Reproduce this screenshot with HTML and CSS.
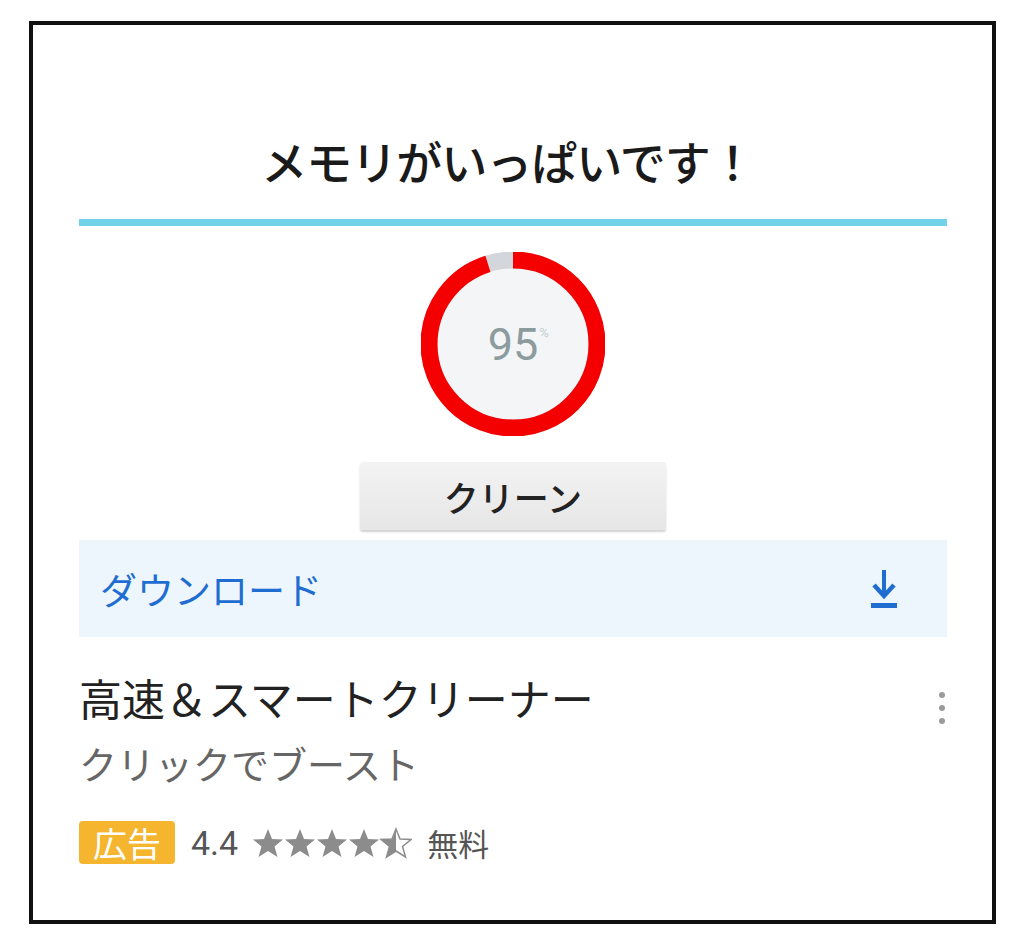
FILE: index.html
```html
<!DOCTYPE html>
<html lang="ja">
<head>
    <meta charset="UTF-8">
    <meta name="viewport" content="width=device-width, initial-scale=1.0">
    <title>メモリがいっぱいです</title>
    <link rel="stylesheet" href="styles.css">
</head>
<body>
    <div class="card">
        <h1 class="title">メモリがいっぱいです！</h1>
        <div class="divider"></div>

        <div class="gauge">
            <svg width="184" height="184" viewBox="0 0 184 184">
                <circle cx="92" cy="92" r="76" fill="#f3f5f7" />
                <circle cx="92" cy="92" r="84" fill="none" stroke="#d3d7db" stroke-width="17" />
                <!-- 95% arc, clockwise from 12 o'clock -->
                <circle cx="92" cy="92" r="84" fill="none" stroke="#f40000" stroke-width="17"
                        stroke-dasharray="501.4 527.8" transform="rotate(-90 92 92)" />
            </svg>
            <div class="gauge-value">95<span class="pct">%</span></div>
        </div>

        <button class="clean">クリーン</button>

        <div class="download">
            <span>ダウンロード</span>
            <svg class="download-icon" width="34" height="44" viewBox="0 0 34 44">
                <path d="M17 3 V28" stroke="#1f6dd1" stroke-width="4" fill="none" />
                <path d="M7 18 L17 29 L27 18" stroke="#1f6dd1" stroke-width="4.5" fill="none" stroke-linejoin="miter" />
                <rect x="4" y="36" width="26" height="5" fill="#1f6dd1" />
            </svg>
        </div>

        <div class="app">
            <div class="app-info">
                <div class="app-name">高速＆スマートクリーナー</div>
                <div class="app-sub">クリックでブースト</div>
                <div class="meta">
                    <span class="ad">広告</span>
                    <span class="rating">4.4</span>
                    <svg class="stars" width="160" height="32" viewBox="0 0 160 32">
                        <defs>
                            <path id="star" d="M16 2 L20 12 L31 12.5 L22.5 19.5 L25.5 30 L16 24 L6.5 30 L9.5 19.5 L1 12.5 L12 12 Z" />
                            <clipPath id="half"><rect x="0" y="0" width="16" height="32" /></clipPath>
                        </defs>
                        <use href="#star" fill="#8c8c8c" />
                        <use href="#star" transform="translate(32 0)" fill="#8c8c8c" />
                        <use href="#star" transform="translate(64 0)" fill="#8c8c8c" />
                        <use href="#star" transform="translate(96 0)" fill="#8c8c8c" />
                        <g transform="translate(128 0)">
                            <use href="#star" fill="none" stroke="#8c8c8c" stroke-width="1.5" />
                            <use href="#star" fill="#8c8c8c" clip-path="url(#half)" />
                        </g>
                    </svg>
                    <span class="price">無料</span>
                </div>
            </div>
            <div class="kebab">
                <span></span><span></span><span></span>
            </div>
        </div>
    </div>
</body>
</html>
```

FILE: styles.css
```css
body {
    margin: 0;
    background-color: #fff;
    font-family: "Noto Sans CJK JP", "Noto Sans", sans-serif;
}
.card {
    box-sizing: border-box;
    width: 967px;
    height: 903px;
    margin: 21px 0 0 29px;
    border: 4px solid #111;
    padding: 0 45px 0 46px;
    display: flex;
    flex-direction: column;
}
.title {
    margin: 0;
    padding-top: 107px;
    padding-right: 10px;
    font-size: 46px;
    line-height: 56px;
    font-weight: 500;
    color: #1a1a1a;
    text-align: center;
    letter-spacing: -1px;
}
.divider {
    height: 7px;
    margin-top: 31px;
    background-color: #72d2ea;
}
.gauge {
    position: relative;
    width: 184px;
    height: 184px;
    margin: 26px auto 0;
}
.gauge svg {
    display: block;
}
.gauge-value {
    position: absolute;
    left: 0;
    right: 0;
    top: 68px;
    text-align: center;
    font-family: Roboto, "Noto Sans", sans-serif;
    font-size: 45px;
    line-height: 50px;
    color: #8c9c9e;
}
.gauge-value .pct {
    position: absolute;
    margin-left: 1px;
    margin-top: 6px;
    font-size: 13px;
    line-height: 13px;
    color: #c5cdcd;
}
.clean {
    align-self: center;
    width: 306px;
    height: 68px;
    margin-top: 26px;
    border: none;
    border-radius: 3px;
    background: linear-gradient(#f3f3f3, #e6e6e6);
    box-shadow: 0 2px 2px rgba(0, 0, 0, 0.18);
    font-family: "Noto Sans CJK JP", sans-serif;
    font-size: 35px;
    font-weight: 500;
    color: #222;
    padding: 0;
}
.download {
    height: 97px;
    margin-top: 10px;
    background-color: #eef6fd;
    display: flex;
    align-items: center;
    justify-content: space-between;
    padding: 0 46px 0 21px;
    font-size: 37px;
    color: #1f6dd1;
}
.download-icon {
    display: block;
}
.app {
    display: flex;
    justify-content: space-between;
    margin-top: 35px;
}
.app-name {
    font-size: 43px;
    line-height: 50px;
    color: #222;
}
.app-sub {
    margin-top: 16px;
    font-size: 38px;
    line-height: 50px;
    color: #666;
}
.meta {
    display: flex;
    align-items: center;
    margin-top: 32px;
}
.ad {
    background-color: #f5b52e;
    color: #fff;
    font-size: 34px;
    line-height: 43px;
    padding: 0 14px;
    border-radius: 4px;
}
.rating {
    margin-left: 16px;
    font-family: Roboto, "Noto Sans", sans-serif;
    font-size: 34px;
    color: #555;
}
.stars {
    margin-left: 14px;
}
.price {
    margin-left: 15px;
    font-size: 31px;
    color: #555;
}
.kebab {
    display: flex;
    flex-direction: column;
    gap: 7px;
    margin-top: 20px;
    margin-right: 2px;
}
.kebab span {
    width: 6px;
    height: 6px;
    border-radius: 50%;
    background-color: #9a9a9a;
}
```
